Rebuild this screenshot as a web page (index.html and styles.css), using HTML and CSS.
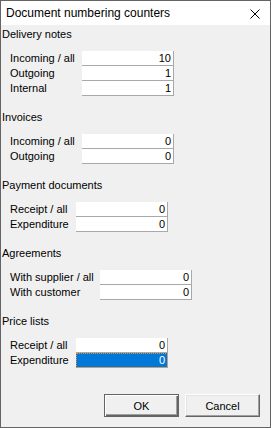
FILE: index.html
```html
<!DOCTYPE html>
<html lang="en">
<head>
    <meta charset="UTF-8">
    <meta name="viewport" content="width=device-width, initial-scale=1.0">
    <title>Document numbering counters</title>
    <link rel="stylesheet" href="styles.css">
</head>
<body>
    <div class="window">
        <div class="titlebar">
            <span class="title">Document numbering counters</span>
            <svg class="close" width="10" height="10" viewBox="0 0 10 10">
                <path d="M0.5 0.5 L9.5 9.5 M9.5 0.5 L0.5 9.5" stroke="#000" stroke-width="1" fill="none"/>
            </svg>
        </div>
        <div class="content">
            <div class="group wide">
                <div class="group-title">Delivery notes</div>
                <div class="fields">
                    <span class="label">Incoming / all</span><span class="field">10</span>
                    <span class="label">Outgoing</span><span class="field">1</span>
                    <span class="label">Internal</span><span class="field">1</span>
                </div>
            </div>
            <div class="group wide">
                <div class="group-title">Invoices</div>
                <div class="fields">
                    <span class="label">Incoming / all</span><span class="field">0</span>
                    <span class="label">Outgoing</span><span class="field">0</span>
                </div>
            </div>
            <div class="group narrow">
                <div class="group-title">Payment documents</div>
                <div class="fields">
                    <span class="label">Receipt / all</span><span class="field">0</span>
                    <span class="label">Expenditure</span><span class="field">0</span>
                </div>
            </div>
            <div class="group widest">
                <div class="group-title">Agreements</div>
                <div class="fields">
                    <span class="label">With supplier / all</span><span class="field">0</span>
                    <span class="label">With customer</span><span class="field">0</span>
                </div>
            </div>
            <div class="group narrow">
                <div class="group-title">Price lists</div>
                <div class="fields">
                    <span class="label">Receipt / all</span><span class="field">0</span>
                    <span class="label">Expenditure</span><span class="field selected">0</span>
                </div>
            </div>
        </div>
        <div class="buttons">
            <button class="default">OK</button>
            <button>Cancel</button>
        </div>
    </div>
</body>
</html>
```

FILE: styles.css
```css
body {
    margin: 0;
    font-family: 'Liberation Sans', Arial, sans-serif;
    font-size: 11px;
    color: #000000;
}

.window {
    width: 271px;
    height: 428px;
    box-sizing: border-box;
    border: 1px solid #646464;
    background-color: #F0F0F0;
    display: flex;
    flex-direction: column;
}

.titlebar {
    height: 24px;
    background-color: #FFFFFF;
    display: flex;
    align-items: center;
    justify-content: space-between;
    padding: 0 10px 0 5px;
}

.title {
    font-size: 12px;
    line-height: 24px;
}

.close {
    display: block;
    margin-top: 1px;
}

.content {
    padding: 3px 0 0 1px;
}

.group + .group {
    margin-top: 15px;
}

.group-title {
    line-height: 13px;
    height: 13px;
}

.fields {
    display: grid;
    grid-template-columns: 72px 92px;
    grid-auto-rows: 15px;
    margin: 10px 0 0 8px;
    line-height: 15px;
}

.narrow .fields {
    grid-template-columns: 66px 92px;
}

.widest .fields {
    grid-template-columns: 90px 92px;
}

.label {
    white-space: nowrap;
}

.field {
    background-color: #FFFFFF;
    border-right: 1px solid #A8A8A8;
    border-bottom: 1px solid #A8A8A8;
    text-align: right;
    padding-right: 2px;
    line-height: 14px;
}

.field.selected {
    background-color: #0078D7;
    color: #FFFFFF;
    outline: 1px dotted #E8913A;
    outline-offset: -1px;
}

.buttons {
    margin-top: auto;
    display: flex;
    justify-content: flex-end;
    gap: 6px;
    padding: 0 10px 10px 0;
}

.buttons button {
    width: 75px;
    height: 23px;
    box-sizing: border-box;
    font-family: 'Liberation Sans', Arial, sans-serif;
    font-size: 11px;
    color: #000000;
    background-color: #F0F0F0;
    border: 1px solid;
    border-color: #FFFFFF #646464 #646464 #FFFFFF;
    box-shadow: inset -1px -1px #A0A0A0, inset 1px 1px #E3E3E3;
    padding: 0;
}

.buttons button.default {
    border-color: #646464;
    box-shadow: inset 1px 1px #FFFFFF, inset -1px -1px #646464, inset -2px -2px #A0A0A0;
}
```
